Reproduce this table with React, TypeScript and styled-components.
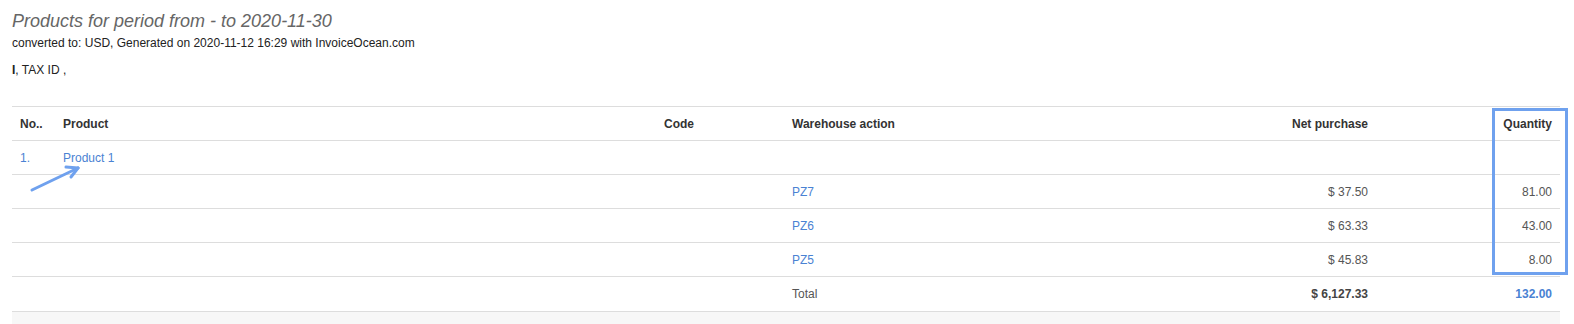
import React from "react";
import styled, { createGlobalStyle } from "styled-components";

const Global = createGlobalStyle`
  html, body { margin: 0; padding: 0; background: #fff; }
  body { font-family: "Liberation Sans", Arial, sans-serif; font-size: 12px; color: #222; }
`;

const Page = styled.div`
  padding: 11px 14px 0 12px;
`;

const Title = styled.h1`
  margin: 0;
  font-size: 18px;
  line-height: 21px;
  font-weight: normal;
  font-style: italic;
  color: #666;
`;

const Sub = styled.div`
  margin-top: 4px;
  font-size: 12px;
  line-height: 14px;
  color: #222;
`;

const Seller = styled.div`
  margin-top: 13px;
  font-size: 12px;
  line-height: 14px;
  color: #222;
`;

const TableWrap = styled.div`
  position: relative;
  margin-top: 29px;
`;

const Table = styled.table`
  width: 100%;
  border-collapse: collapse;
  table-layout: fixed;
  font-size: 12px;
`;

const Row = styled.tr`
  height: 34px;
  border-top: 1px solid #ddd;
`;

const Th = styled.th<{ $right?: boolean }>`
  padding: 0 8px;
  text-align: ${(p) => (p.$right ? "right" : "left")};
  font-weight: bold;
  color: #333;
  vertical-align: middle;
`;

const Td = styled.td<{ $right?: boolean; $tone?: "link" | "text" | "bold" | "boldLink" }>`
  padding: 0 8px;
  text-align: ${(p) => (p.$right ? "right" : "left")};
  vertical-align: middle;
  color: ${(p) =>
    p.$tone === "link" || p.$tone === "boldLink" ? "#4a82d3" : p.$tone === "bold" ? "#444" : "#555"};
  font-weight: ${(p) => (p.$tone === "bold" || p.$tone === "boldLink" ? "bold" : "normal")};
`;

const Footer = styled.div`
  border-top: 1px solid #ddd;
  background: #f7f7f7;
  height: 16px;
`;

const Highlight = styled.div`
  position: absolute;
  left: 1480px;
  top: 2px;
  width: 76px;
  height: 167px;
  box-sizing: border-box;
  border: 3px solid #6fa1ee;
  pointer-events: none;
`;

const Arrow = styled.svg`
  position: absolute;
  left: 16px;
  top: 56px;
`;

const items = [
  { doc: "PZ7", price: "$ 37.50", qty: "81.00" },
  { doc: "PZ6", price: "$ 63.33", qty: "43.00" },
  { doc: "PZ5", price: "$ 45.83", qty: "8.00" },
];

export default function App() {
  return (
    <Page>
      <Global />
      <Title>Products for period from - to 2020-11-30</Title>
      <Sub>converted to: USD, Generated on 2020-11-12 16:29 with InvoiceOcean.com</Sub>
      <Seller>
        <b>I</b>, TAX ID ,
      </Seller>
      <TableWrap>
        <Table>
          <colgroup>
            <col style={{ width: 43 }} />
            <col style={{ width: 601 }} />
            <col style={{ width: 128 }} />
            <col style={{ width: 296 }} />
            <col style={{ width: 296 }} />
            <col style={{ width: 184 }} />
          </colgroup>
          <thead>
            <Row>
              <Th>No..</Th>
              <Th>Product</Th>
              <Th>Code</Th>
              <Th>Warehouse action</Th>
              <Th $right>Net purchase</Th>
              <Th $right>Quantity</Th>
            </Row>
          </thead>
          <tbody>
            <Row>
              <Td $tone="link">1.</Td>
              <Td $tone="link">Product 1</Td>
              <Td />
              <Td />
              <Td />
              <Td />
            </Row>
            {items.map((it) => (
              <Row key={it.doc}>
                <Td />
                <Td />
                <Td />
                <Td $tone="link">{it.doc}</Td>
                <Td $right>{it.price}</Td>
                <Td $right>{it.qty}</Td>
              </Row>
            ))}
            <Row>
              <Td />
              <Td />
              <Td />
              <Td>Total</Td>
              <Td $right $tone="bold">$ 6,127.33</Td>
              <Td $right $tone="boldLink">132.00</Td>
            </Row>
          </tbody>
        </Table>
        <Footer />
        <Highlight />
        <Arrow width="70" height="34" viewBox="0 0 70 34">
          <g stroke="#6fa1ee" strokeWidth="3" strokeLinecap="round" fill="none">
            <line x1="4" y1="28" x2="50" y2="6" />
            <line x1="50" y1="6" x2="38" y2="5" />
            <line x1="50" y1="6" x2="43" y2="15" />
          </g>
        </Arrow>
      </TableWrap>
    </Page>
  );
}
